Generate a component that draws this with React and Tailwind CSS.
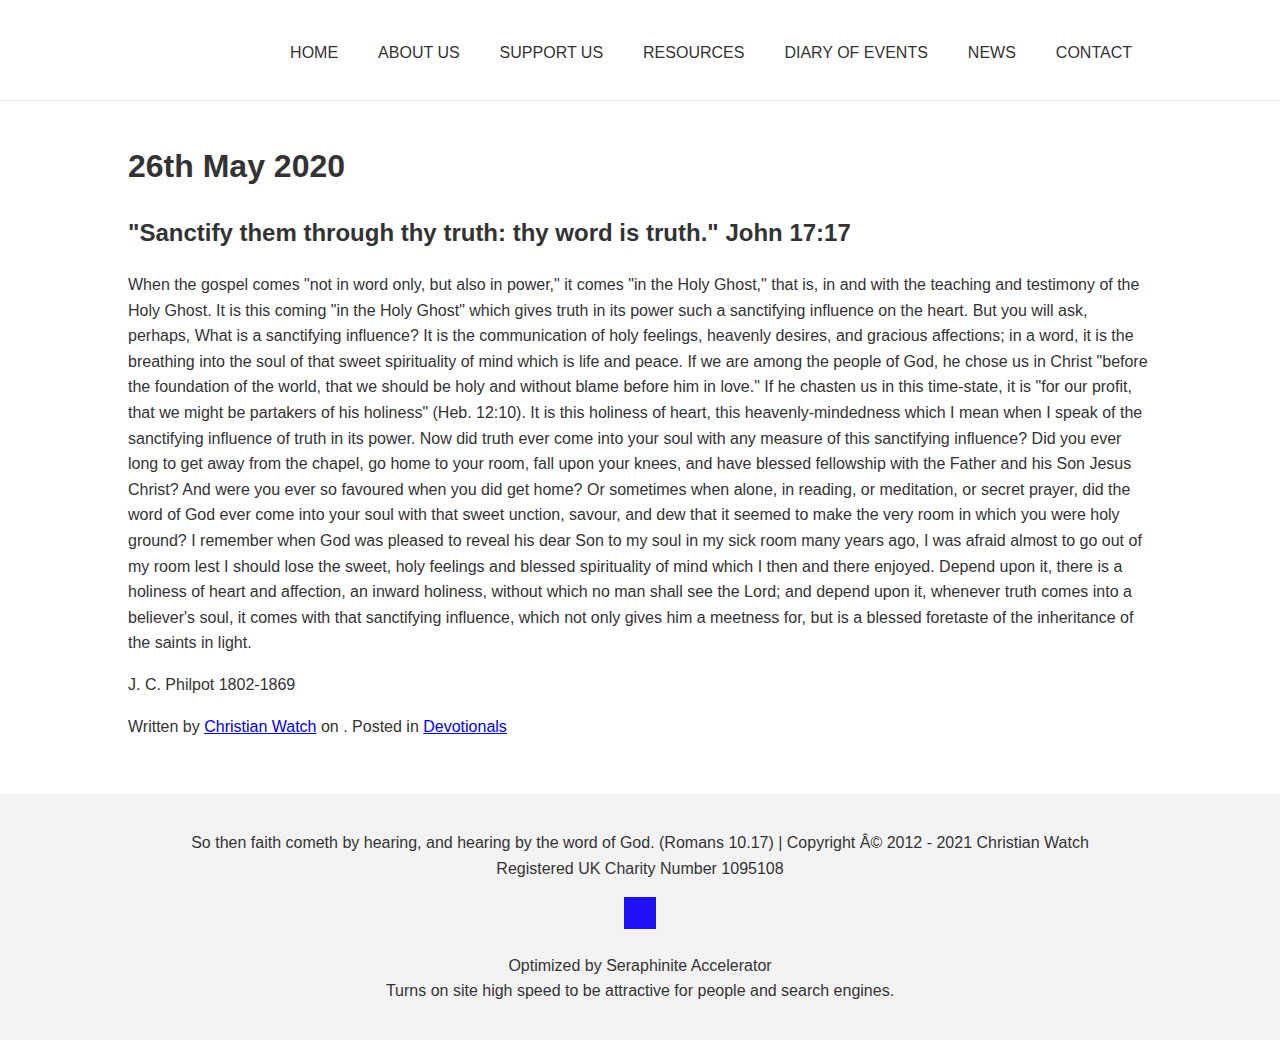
import React from 'react';

const navItems = ['HOME', 'ABOUT US', 'SUPPORT US', 'RESOURCES', 'DIARY OF EVENTS', 'NEWS', 'CONTACT'];

const body =
  'When the gospel comes "not in word only, but also in power," it comes "in the Holy Ghost," that is, in and with the teaching and testimony of the Holy Ghost. It is this coming "in the Holy Ghost" which gives truth in its power such a sanctifying influence on the heart. But you will ask, perhaps, What is a sanctifying influence? It is the communication of holy feelings, heavenly desires, and gracious affections; in a word, it is the breathing into the soul of that sweet spirituality of mind which is life and peace. If we are among the people of God, he chose us in Christ "before the foundation of the world, that we should be holy and without blame before him in love." If he chasten us in this time-state, it is "for our profit, that we might be partakers of his holiness" (Heb. 12:10). It is this holiness of heart, this heavenly-mindedness which I mean when I speak of the sanctifying influence of truth in its power. Now did truth ever come into your soul with any measure of this sanctifying influence? Did you ever long to get away from the chapel, go home to your room, fall upon your knees, and have blessed fellowship with the Father and his Son Jesus Christ? And were you ever so favoured when you did get home? Or sometimes when alone, in reading, or meditation, or secret prayer, did the word of God ever come into your soul with that sweet unction, savour, and dew that it seemed to make the very room in which you were holy ground? I remember when God was pleased to reveal his dear Son to my soul in my sick room many years ago, I was afraid almost to go out of my room lest I should lose the sweet, holy feelings and blessed spirituality of mind which I then and there enjoyed. Depend upon it, there is a holiness of heart and affection, an inward holiness, without which no man shall see the Lord; and depend upon it, whenever truth comes into a believer\'s soul, it comes with that sanctifying influence, which not only gives him a meetness for, but is a blessed foretaste of the inheritance of the saints in light.';

// Top navigation bar
const Header = () => (
  <header className="h-[101px] border-b border-[#e5e5e5] bg-white">
    <div className="mx-auto flex h-full w-[1024px] items-center justify-end pt-[6px]">
      <nav className="flex">
        {navItems.map((item) => (
          <a key={item} href="#" className="px-5 text-base text-[#333]">
            {item}
          </a>
        ))}
      </nav>
    </div>
  </header>
);

const Footer = () => (
  <footer className="bg-[#f3f3f3] pt-[36px] pb-[37px] text-center text-base leading-[26px] text-[#333]">
    <p>So then faith cometh by hearing, and hearing by the word of God. (Romans 10.17) | Copyright Â© 2012 - 2021 Christian Watch</p>
    <p>Registered UK Charity Number 1095108</p>
    <div className="mt-[15px] flex justify-center">
      <div className="h-8 w-8 bg-[#1f10f6]" />
    </div>
    <div className="mt-[24px]">
      <p>Optimized by Seraphinite Accelerator</p>
      <p className="-mt-px">Turns on site high speed to be attractive for people and search engines.</p>
    </div>
  </footer>
);

const App = () => {
  return (
    <div className="min-h-screen bg-white font-['Liberation_Sans',Arial,sans-serif] text-[#333]">
      <Header />
      <main className="mx-auto w-[1024px] pt-[46px] pb-[55px]">
        <h1 className="text-[32px] font-bold leading-[38px]">26th May 2020</h1>
        <h2 className="mt-[33px] text-2xl font-bold leading-[29px]">
          "Sanctify them through thy truth: thy word is truth." John 17:17
        </h2>
        <p className="mt-[25px] text-base leading-[25.6px]">{body}</p>
        <p className="mt-4 text-base leading-[25.6px]">J. C. Philpot 1802-1869</p>
        <p className="mt-4 text-base leading-[25.6px]">
          Written by{' '}
          <a href="#" className="text-[#0000ee] underline">Christian Watch</a> on . Posted in{' '}
          <a href="#" className="text-[#0000ee] underline">Devotionals</a>
        </p>
      </main>
      <Footer />
    </div>
  );
};

export default App;
